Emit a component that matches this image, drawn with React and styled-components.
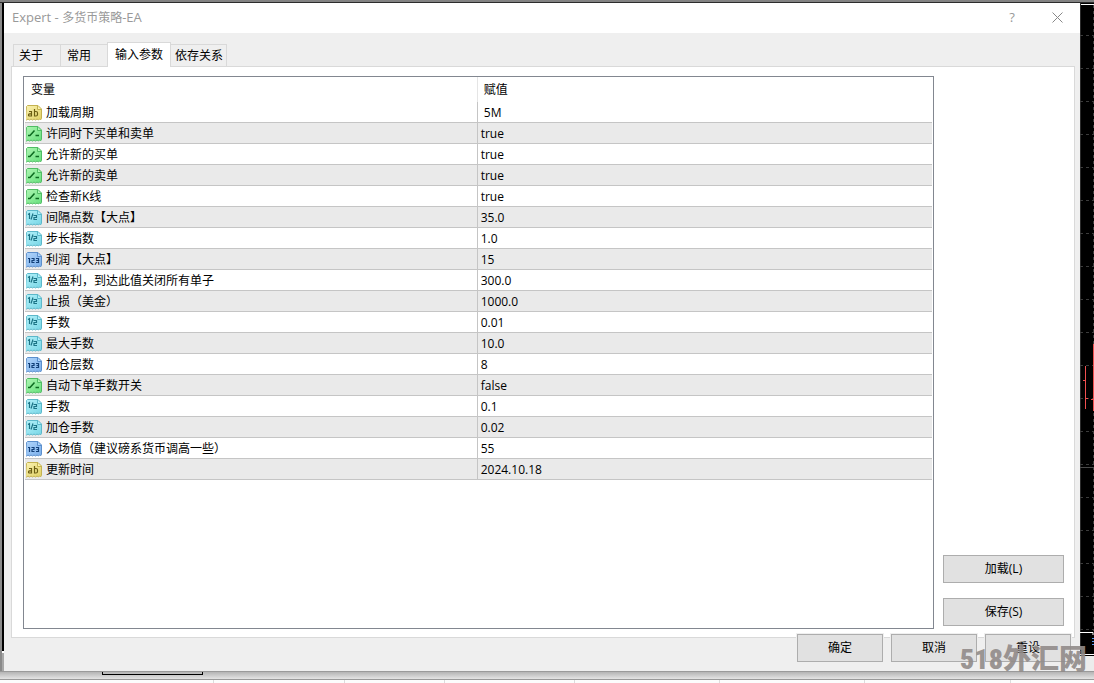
import { useState } from "react";
import styled, { createGlobalStyle, ThemeProvider } from "styled-components";

const theme = {
  font: '"Open Sans", "Noto Sans CJK SC", sans-serif',
  face: "#efefef",
  line: "#d9d9d9",
  frame: "#828790",
  grid: "#c5c5c5",
  rowAlt: "#eaeaea",
  button: "#e1e1e1",
  buttonLine: "#adadad",
};

const GlobalStyle = createGlobalStyle`
  * {
    box-sizing: border-box;
  }

  body {
    margin: 0;
    background: #fcfcfc;
    font-family: ${theme.font};
    font-size: 12px;
    color: #000;
  }

  button {
    font: inherit;
    color: inherit;
  }
`;

const Desktop = styled.div`
  min-height: 100vh;
  display: flex;
  flex-direction: column;
  border-top: 2px solid #828282;
  overflow: hidden;
`;

const Workspace = styled.div`
  flex: 1;
  display: grid;
  grid-template-columns: 4px minmax(0, 1fr) 14px;
  border-top: 1px solid #2c2c2c;
`;

const LeftEdge = styled.div`
  display: flex;
  flex-direction: column;
  justify-content: flex-end;
  border-left: 2px solid #8a8a8a;
  background: #000;

  &::after {
    content: "";
    height: 18px;
    border-top: 2px solid #fff;
    background: #a8a8a8;
  }
`;

const ChartEdge = styled.svg`
  width: 14px;
  height: 100%;
  min-height: 0;
  background: #000;
`;

/* main window */

const Dialog = styled.section`
  position: relative;
  display: flex;
  flex-direction: column;
  background: ${(props) => props.theme.face};
`;

const TitleBar = styled.header`
  display: flex;
  align-items: center;
  height: 30px;
  padding: 0 8px 2px;
  background: #fff;
  color: #999;
`;

const Title = styled.h1`
  flex: 1;
  margin: 0;
  font-size: 13px;
  font-weight: 400;
  line-height: 18px;
`;

const TitleName = styled.span`
  font-size: 12px;
`;

const TitleButton = styled.button`
  display: flex;
  align-items: center;
  justify-content: center;
  width: 30px;
  height: 28px;
  margin-left: 15px;
  padding: 0;
  border: none;
  background: none;
  font-size: 13px;
`;

const Body = styled.div`
  flex: 1;
  display: flex;
  flex-direction: column;
  padding: 9px 5px 9px 7px;
`;

const TabList = styled.div`
  display: flex;
  align-items: flex-end;
  height: 24px;
  padding-left: 2px;
`;

const Tab = styled.button`
  position: relative;
  height: ${(props) => (props.$active ? "25px" : "22px")};
  width: ${(props) => props.$width};
  margin: 0 -1px ${(props) => (props.$active ? "-1px" : "0")} 0;
  padding: 0 0 ${(props) => (props.$active ? "3px" : "1px")} ${(props) => props.$indent};
  border: 1px solid ${(props) => props.theme.line};
  border-bottom: none;
  background: ${(props) => (props.$active ? "#fff" : props.theme.face)};
  text-align: left;
  white-space: nowrap;
`;

const Panel = styled.div`
  flex: 1;
  display: grid;
  grid-template-columns: minmax(0, 1fr) 121px;
  gap: 9px;
  padding: 9px 10px 8px 11px;
  border: 1px solid ${(props) => props.theme.line};
  background: #fff;
`;

const ListFrame = styled.div`
  padding: 0 1px;
  border: 1px solid ${(props) => props.theme.frame};
  background: #fff;
`;

const Table = styled.table`
  width: 100%;
  table-layout: fixed;
  border-spacing: 0;
`;

const HeadCell = styled.th`
  width: ${(props) => (props.$divided ? "50.2%" : "49.8%")};
  height: 25px;
  padding: 0 6px;
  border-left: ${(props) => (props.$divided ? "1px solid #e5e5e5" : "none")};
  font-weight: 400;
  line-height: 18px;
  text-align: left;
`;

const Row = styled.tr`
  height: 21px;

  &:nth-child(even) {
    background: ${(props) => props.theme.rowAlt};
  }
`;

const NameCell = styled.td`
  padding: 0;
  border-bottom: 1px solid ${(props) => props.theme.grid};
`;

const NameContent = styled.div`
  display: flex;
  align-items: center;
  gap: 4px;
  height: 20px;
  padding: 2px 0 0 1px;
  line-height: 18px;
  white-space: nowrap;
`;

const ValueCell = styled.td`
  padding: 2px 3px 0;
  border-left: 1px solid ${(props) => props.theme.grid};
  border-bottom: 1px solid ${(props) => props.theme.grid};
  line-height: 18px;
  white-space: pre;
`;

const SideButtons = styled.div`
  display: flex;
  flex-direction: column;
  justify-content: flex-end;
  gap: 15px;
  padding-bottom: 3px;
`;

const PushButton = styled.button`
  width: ${(props) => (props.$wide ? "100%" : "86px")};
  height: 28px;
  padding: 0 0 2px;
  border: 1px solid ${(props) => props.theme.buttonLine};
  background: ${(props) => props.theme.button};
  box-shadow: 0 0 0 1px ${(props) => (props.$wide ? "#fff" : props.theme.face)};
`;

const Footer = styled.footer`
  position: relative;
  display: flex;
  justify-content: flex-end;
  gap: 8px;
  margin-top: -4px;
  padding-right: 4px;
`;

/* bottom of the terminal */

const BottomShade = styled.div`
  height: 9px;
  padding-left: 102px;
  border-top: 1px solid #9a9a9a;
  border-bottom: 1px solid #999;
  background: linear-gradient(#b4b4b4, #e4e4e4);
`;

const SheetTab = styled.div`
  width: 101px;
  height: 3px;
  border: 1px solid #000;
  border-top: none;
`;

const StatusBar = styled.div`
  display: flex;
  height: 3px;
  padding-left: 84px;
  background: #fcfcfc;
`;

const StatusCell = styled.div`
  width: ${(props) => props.$width};
  border-right: 1px solid #dcdcdc;
`;

const Watermark = styled.div`
  position: absolute;
  right: -7px;
  bottom: -6px;
  display: flex;
  align-items: center;
  height: 34px;
  font-family: "Liberation Sans Narrow", "Roboto Condensed", "Open Sans Condensed", "Liberation Sans", "Noto Sans CJK SC", sans-serif;
  font-size: 28px;
  font-weight: 900;
  line-height: 34px;
  color: rgba(146, 140, 138, 0.92);
  pointer-events: none;
`;

const iconColors = {
  string: { light: "#fbf3b4", dark: "#e0d064", edge: "#c4b250", ink: "#6b5d12" },
  bool: { light: "#b0f6b4", dark: "#66e07c", edge: "#50bd64", ink: "#0c6a20" },
  double: { light: "#b4f2fa", dark: "#78d6e6", edge: "#5cb8ca", ink: "#1c7486" },
  int: { light: "#b2d6fb", dark: "#7aaeea", edge: "#5c8fcc", ink: "#123f78" },
};

const iconGlyphs = {
  string: (
    <path d="M3 6.500h2.500v4.500H3.500q-1 0-1-1t1-1.200h2M8.500 4v7h1.500q1.500 0 1.500-1.500V8q0-1.500-1.500-1.500H8.500" />
  ),
  bool: <path d="M2 9.500h2L8.500 4.500M9.500 9.500H13" strokeWidth="1.500" />,
  double: <path d="M2 4.500l1.500-1V9M5 9.500L7 3.500M7.500 5.500h3v2h-2.500v2h3" />,
  int: <path d="M2 6.500h1.500v4.500M5.500 6.500h2.500v2H6v2h2.500M10 6.500h2.500v4H10M10.500 8.500h2" />,
};

const TypeIcon = ({ type }) => {
  const { light, dark, edge, ink } = iconColors[type];
  return (
    <svg width="16" height="16" viewBox="0 0 16 16" aria-hidden="true">
      <defs>
        <linearGradient id={`fill-${type}`} x1="0" y1="0" x2="1" y2="1">
          <stop offset="0" stopColor={light} />
          <stop offset="1" stopColor={dark} />
        </linearGradient>
      </defs>
      <path
        d="M.500 1.500l1-1H12L15.500 4v9.500l-.500 1-1.500-.500-1 1-1.500-1-1.500 1-1.500-1-1.500 1-1.500-1-1.500 1-1.500-1-1.500 1-1-.500z"
        fill={`url(#fill-${type})`}
        stroke={edge}
      />
      <path d="M11.500 1V4.500H15" fill={light} stroke={edge} />
      <g fill="none" stroke={ink} strokeWidth="1.200">
        {iconGlyphs[type]}
      </g>
    </svg>
  );
};

const tabs = [
  { label: "关于", width: "48px", indent: "5px" },
  { label: "常用", width: "48px", indent: "6px" },
  { label: "输入参数", width: "64px", indent: "7px" },
  { label: "依存关系", width: "57px", indent: "4px" },
];

const params = [
  { type: "string", name: "加载周期", value: " 5M" },
  { type: "bool", name: "许同时下买单和卖单", value: "true" },
  { type: "bool", name: "允许新的买单", value: "true" },
  { type: "bool", name: "允许新的卖单", value: "true" },
  { type: "bool", name: "检查新K线", value: "true" },
  { type: "double", name: "间隔点数【大点】", value: "35.0" },
  { type: "double", name: "步长指数", value: "1.0" },
  { type: "int", name: "利润【大点】", value: "15" },
  { type: "double", name: "总盈利，到达此值关闭所有单子", value: "300.0" },
  { type: "double", name: "止损（美金）", value: "1000.0" },
  { type: "double", name: "手数", value: "0.01" },
  { type: "double", name: "最大手数", value: "10.0" },
  { type: "int", name: "加仓层数", value: "8" },
  { type: "bool", name: "自动下单手数开关", value: "false" },
  { type: "double", name: "手数", value: "0.1" },
  { type: "double", name: "加仓手数", value: "0.02" },
  { type: "int", name: "入场值（建议磅系货币调高一些）", value: "55" },
  { type: "string", name: "更新时间", value: "2024.10.18" },
];

const statusCells = ["130px", "131px", "100px", "130px", "145px", "145px", "146px"];

const gridLines = Array.from({ length: 19 }, (_, i) => 32 + i * 33);

const Chart = () => (
  <ChartEdge viewBox="0 0 14 668" preserveAspectRatio="xMinYMin slice" aria-hidden="true">
    <path d="M0 1.500H14" stroke="#fff" />
    <path d="M.500 0V668" stroke="#2c2c2c" />
    <path d="M13.500 2V628" stroke="#3c3c3c" strokeDasharray="3 3" />
    {gridLines.map((y) => (
      <path key={y} d={`M0 ${y + 0.5}H14`} stroke="#3c3c3c" strokeDasharray="3 3" />
    ))}
    <path d="M0 464.500H14" stroke="#4a4a4a" />
    <path d="M5.500 363V406M3 377.500H5M6 395.500H8M13.500 341V408M11 396.500H13" stroke="#f05050" />
    <path d="M0 629.500H13V632" stroke="#fff" fill="none" />
    <path d="M12 635.500h2M12 638.500h2M12 641.500h2" stroke="#5a9cf0" />
    <path d="M0 651.500H14" stroke="#fff" />
    <path d="M0 653H14V668H0z" fill="#ececec" />
  </ChartEdge>
);

export default function App() {
  const [active, setActive] = useState(2);

  return (
    <ThemeProvider theme={theme}>
      <GlobalStyle />
      <Desktop>
        <Workspace>
          <LeftEdge />
          <Dialog>
            <TitleBar>
              <Title>
                Expert - <TitleName>多货币策略</TitleName>-EA
              </Title>
              <TitleButton aria-label="帮助">?</TitleButton>
              <TitleButton aria-label="关闭">
                <svg width="11" height="11" viewBox="0 0 11 11">
                  <path d="M.500.500l10 10M10.500.500l-10 10" stroke="#888" fill="none" />
                </svg>
              </TitleButton>
            </TitleBar>
            <Body>
              <TabList role="tablist">
                {tabs.map((tab, i) => (
                  <Tab
                    key={tab.label}
                    role="tab"
                    aria-selected={i === active}
                    $active={i === active}
                    $width={tab.width}
                    $indent={tab.indent}
                    onClick={() => setActive(i)}
                  >
                    {tab.label}
                  </Tab>
                ))}
              </TabList>
              <Panel role="tabpanel">
                <ListFrame>
                  <Table>
                    <thead>
                      <tr>
                        <HeadCell>变量</HeadCell>
                        <HeadCell $divided>赋值</HeadCell>
                      </tr>
                    </thead>
                    <tbody>
                      {params.map((param, i) => (
                        <Row key={i}>
                          <NameCell>
                            <NameContent>
                              <TypeIcon type={param.type} />
                              {param.name}
                            </NameContent>
                          </NameCell>
                          <ValueCell>{param.value}</ValueCell>
                        </Row>
                      ))}
                    </tbody>
                  </Table>
                </ListFrame>
                <SideButtons>
                  <PushButton $wide>加载(L)</PushButton>
                  <PushButton $wide>保存(S)</PushButton>
                </SideButtons>
              </Panel>
              <Footer>
                <PushButton>确定</PushButton>
                <PushButton>取消</PushButton>
                <PushButton>重设</PushButton>
              </Footer>
            </Body>
            <Watermark>518外汇网</Watermark>
          </Dialog>
          <Chart />
        </Workspace>
        <BottomShade>
          <SheetTab />
        </BottomShade>
        <StatusBar>
          {statusCells.map((width, i) => (
            <StatusCell key={i} $width={width} />
          ))}
        </StatusBar>
      </Desktop>
    </ThemeProvider>
  );
}
